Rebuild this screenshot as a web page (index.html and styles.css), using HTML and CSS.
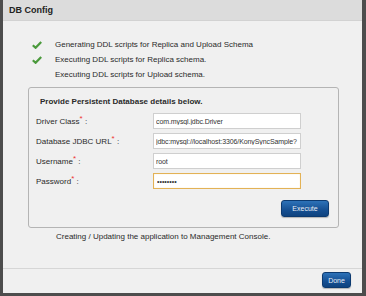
FILE: index.html
```html
<!DOCTYPE html>
<html lang="en">
<head>
  <meta charset="UTF-8" />
  <title>DB Config</title>
  <link rel="stylesheet" href="styles.css">
</head>
<body>
  <div class="dialog">
    <div class="dialog-header">DB Config</div>

    <div class="dialog-body">
      <ul class="steps">
        <li class="step done">
          <span class="check">
            <svg width="10" height="8" viewBox="0 0 10 8"><path d="M0.8 4.2 L3.6 6.8 L9.2 1" fill="none" stroke="#4b9a3c" stroke-width="2.2"/></svg>
          </span>
          Generating DDL scripts for Replica and Upload Schema
        </li>
        <li class="step done">
          <span class="check">
            <svg width="10" height="8" viewBox="0 0 10 8"><path d="M0.8 4.2 L3.6 6.8 L9.2 1" fill="none" stroke="#4b9a3c" stroke-width="2.2"/></svg>
          </span>
          Executing DDL scripts for Replica schema.
        </li>
        <li class="step">
          <span class="check"></span>
          Executing DDL scripts for Upload schema.
        </li>
      </ul>

      <div class="db-box">
        <div class="db-title">Provide Persistent Database details below.</div>
        <div class="field">
          <label>Driver Class<sup>*</sup> :</label>
          <input type="text" value="com.mysql.jdbc.Driver">
        </div>
        <div class="field">
          <label>Database JDBC URL<sup>*</sup> :</label>
          <input type="text" value="jdbc:mysql://localhost:3306/KonySyncSample?">
        </div>
        <div class="field">
          <label>Username<sup>*</sup> :</label>
          <input type="text" value="root">
        </div>
        <div class="field">
          <label>Password<sup>*</sup> :</label>
          <input type="password" class="focused" value="12345678">
        </div>
        <div class="box-actions">
          <button class="btn">Execute</button>
        </div>
      </div>

      <div class="step-note">Creating / Updating the application to Management Console.</div>
    </div>

    <div class="dialog-footer">
      <button class="btn btn-small">Done</button>
    </div>
  </div>
</body>
</html>
```

FILE: styles.css
```css
* { margin: 0; padding: 0; box-sizing: border-box; }
body {
  font-family: 'Liberation Sans', Arial, sans-serif;
  font-size: 8px;
  color: #2a2a2a;
  background: #4d4d4d;
  padding: 0 4px 3px 3px;
  height: 296px;
  overflow: hidden;
}
.dialog {
  height: 293px;
  background: #f0f0f0;
  display: flex;
  flex-direction: column;
}
.dialog-header {
  height: 21px;
  line-height: 20px;
  padding-left: 6px;
  background: #dcdcdc;
  border-bottom: 1px solid #d2d2d2;
  font-size: 9px;
  font-weight: bold;
  color: #222;
}
.dialog-body {
  flex: 1;
  padding: 16px 0 0 0;
}
.steps {
  list-style: none;
  padding-left: 29px;
}
.step {
  display: flex;
  align-items: center;
  height: 15px;
}
.check {
  width: 10px;
  height: 8px;
  margin-right: 13px;
  display: flex;
}
.db-box {
  margin: 5px 23px 0 25px;
  border: 1px solid #b4b4b4;
  border-radius: 3px;
  padding: 8px 9px 10px 7px;
}
.db-title {
  font-weight: bold;
  padding-left: 4px;
  height: 12px;
  line-height: 12px;
  margin-bottom: 5px;
}
.field {
  display: flex;
  align-items: center;
  height: 16px;
  margin-bottom: 4px;
}
.field label {
  width: 117px;
}
.field sup {
  color: #e33;
  font-size: 8px;
  vertical-align: 0;
  position: relative;
  top: -3px;
}
.field input {
  width: 148px;
  height: 16px;
  border: 1px solid #cfcfcf;
  background: #fff;
  font-family: 'Liberation Sans', Arial, sans-serif;
  font-size: 7px;
  letter-spacing: -0.1px;
  color: #333;
  padding: 0 1px 0 2px;
  outline: none;
}
.field input.focused {
  border-color: #e3b256;
  box-shadow: inset 0 0 1px #f0d090;
  letter-spacing: 0;
  padding-left: 3px;
}
.box-actions {
  display: flex;
  justify-content: flex-end;
  margin-top: 11px;
}
.btn {
  height: 17px;
  width: 48px;
  border: 1px solid #0c3a70;
  border-radius: 3px;
  background: linear-gradient(#2d72b8, #154f92 60%, #0f437f);
  color: #e8eef6;
  font-family: 'Liberation Sans', Arial, sans-serif;
  font-size: 7px;
  box-shadow: 0 1px 1px rgba(0, 0, 0, 0.25);
}
.btn-small {
  width: 29px;
  height: 16px;
}
.step-note {
  padding-left: 53px;
  margin-top: 4px;
  height: 10px;
  line-height: 10px;
}
.dialog-footer {
  border-top: 1px solid #d6d6d6;
  display: flex;
  justify-content: flex-end;
  padding: 3px 11px 5px 0;
}
```
